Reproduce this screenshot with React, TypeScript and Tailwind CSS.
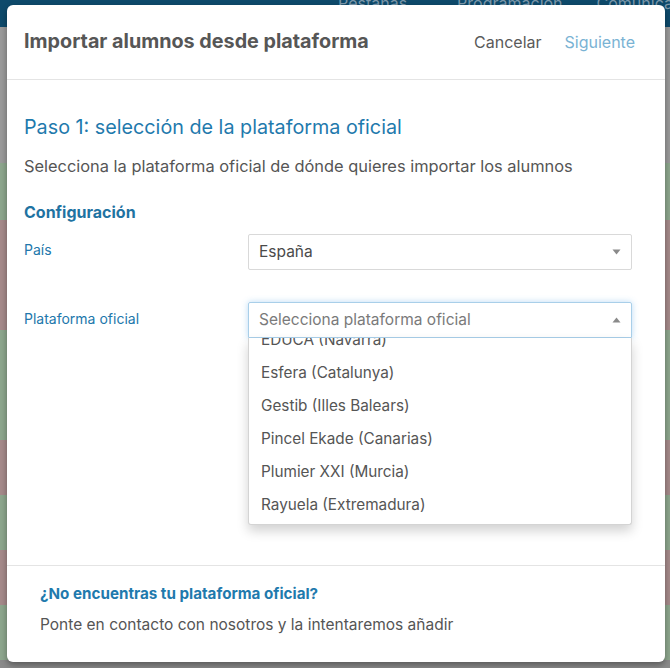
import React from "react";

const rows = [
  { h: 27, c: "bg-[#0e4a6b]" },
  { h: 80, c: "bg-[#9a9a9a]" },
  { h: 56, c: "bg-[#9a9a9a]" },
  { h: 57, c: "bg-[#8da68d]" },
  { h: 110, c: "bg-[#a58a8a]" },
  { h: 110, c: "bg-[#8da68d]" },
  { h: 55, c: "bg-[#a58a8a]" },
  { h: 55, c: "bg-[#8da68d]" },
  { h: 55, c: "bg-[#a58a8a]" },
  { h: 55, c: "bg-[#8da68d]" },
  { h: 40, c: "bg-[#8a8a8a]" },
];

const options = [
  "EDUCA (Navarra)",
  "Esfera (Catalunya)",
  "Gestib (Illes Balears)",
  "Pincel Ekade (Canarias)",
  "Plumier XXI (Murcia)",
  "Rayuela (Extremadura)",
];

function Caret({ up }: { up?: boolean }) {
  return (
    <svg width="9" height="6" viewBox="0 0 9 6" className="shrink-0">
      {up ? (
        <path d="M0.5 5.5 L4.5 0.5 L8.5 5.5 Z" fill="#8a8a8a" />
      ) : (
        <path d="M0.5 0.5 L4.5 5.5 L8.5 0.5 Z" fill="#8a8a8a" />
      )}
    </svg>
  );
}

export default function App() {
  return (
    <div
      className="relative h-[668px] w-[670px] overflow-hidden"
      style={{ fontFamily: "Inter, 'Noto Sans', sans-serif" }}
    >
      {/* page behind the overlay, already dimmed */}
      <div className="flex flex-col">
        {rows.map((r, i) => (
          <div key={i} className={r.c} style={{ height: r.h }} />
        ))}
      </div>
      <div className="absolute left-[338px] top-[-9px] flex text-[16px] text-[#7d98aa]">
        <span>Pestañas ▾</span>
        <span className="ml-[50px]">Programación</span>
        <span className="ml-[34px]">Comunicación</span>
      </div>

      {/* modal */}
      <div className="absolute left-[7px] top-[5px] flex h-[657px] w-[658px] flex-col rounded-[6px] bg-white shadow-[0_3px_6px_rgba(0,0,0,0.35)]">
        <div className="flex h-[75px] shrink-0 items-center justify-between border-b border-[#e4e4e4] pl-[17px] pr-[30px]">
          <h1 className="text-[19.75px] font-bold text-[#565656]">
            Importar alumnos desde plataforma
          </h1>
          <div className="flex items-center gap-[23px] text-[16px]">
            <span className="text-[#5a5a5a]">Cancelar</span>
            <span className="text-[#7ab3d4]">Siguiente</span>
          </div>
        </div>

        <div className="flex-1 px-[17px] pt-[34px]">
          <h2 className="text-[19.75px] leading-[26px] text-[#1f7aad]">
            Paso 1: selección de la plataforma oficial
          </h2>
          <p className="mt-[16px] text-[16.4px] leading-[20px] text-[#555]">
            Selecciona la plataforma oficial de dónde quieres importar los alumnos
          </p>
          <h3 className="mt-[26px] text-[16px] font-bold leading-[20px] text-[#1f73a2]">
            Configuración
          </h3>

          <div className="mt-[12px] flex items-start">
            <label className="w-[224px] pt-[7px] text-[14px] leading-[18px] text-[#2277ab]">
              País
            </label>
            <div className="flex h-[36px] w-[384px] items-center justify-between rounded-[2px] border border-[#d9d9d9] px-[10px] text-[15.5px] text-[#4a4a4a]">
              <span>España</span>
              <Caret />
            </div>
          </div>

          <div className="mt-[32px] flex items-start">
            <label className="w-[224px] pt-[8px] text-[14px] leading-[18px] text-[#2277ab]">
              Plataforma oficial
            </label>
            <div className="relative w-[384px]">
              <div className="flex h-[36px] items-center justify-between rounded-t-[2px] border border-[#a9cfe9] px-[10px] text-[15.5px] text-[#7a7a7a] shadow-[0_0_6px_rgba(102,175,233,0.45)]">
                <span>Selecciona plataforma oficial</span>
                <Caret up />
              </div>
              <div className="absolute left-0 right-0 top-[36px] h-[187px] overflow-hidden rounded-b-[3px] border border-t-0 border-[#d4d4d4] bg-white shadow-[0_6px_12px_rgba(0,0,0,0.18)]">
                <div className="-mt-[14px]">
                  {options.map((o) => (
                    <div
                      key={o}
                      className="flex h-[33px] items-center px-[12px] text-[15.3px] text-[#555]"
                    >
                      {o}
                    </div>
                  ))}
                </div>
              </div>
            </div>
          </div>
        </div>

        <div className="h-[97px] shrink-0 border-t border-[#e4e4e4] px-[33px] pt-[18px]">
          <h4 className="text-[15.2px] font-bold leading-[20px] text-[#1f7aad]">
            ¿No encuentras tu plataforma oficial?
          </h4>
          <p className="mt-[11px] text-[15.5px] leading-[20px] text-[#555]">
            Ponte en contacto con nosotros y la intentaremos añadir
          </p>
        </div>
      </div>
    </div>
  );
}
